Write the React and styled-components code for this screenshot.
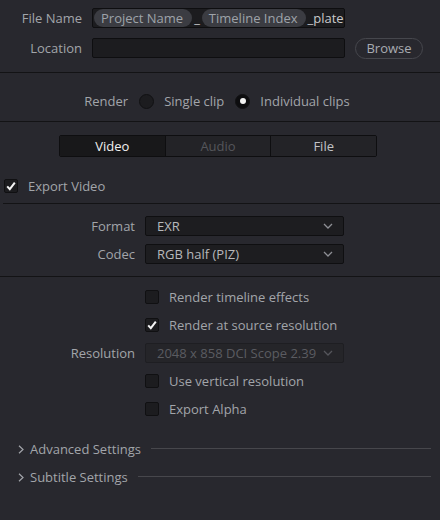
import React from 'react';
import styled, { createGlobalStyle } from 'styled-components';

const GlobalStyle = createGlobalStyle`
	html, body {
		margin: 0;
		background: #28282e;
	}
	body {
		font-family: 'Open Sans', 'Noto Sans', sans-serif;
		font-size: 13px;
		color: #a2a5aa;
	}
`;

const Panel = styled.div`
	width: 440px;
	height: 520px;
	background: #28282e;
	display: flex;
	flex-direction: column;
	overflow: hidden;
`;

const Section = styled.div`
	padding: ${(p) => p.$pad || '0'};
`;

const Divider = styled.div`
	height: 1px;
	background: #131315;
	margin-left: ${(p) => p.$inset || 0}px;
`;

const FileGrid = styled.div`
	display: grid;
	grid-template-columns: 82px 253px 68px;
	grid-auto-rows: 20px;
	column-gap: 10px;
	row-gap: 10px;
	align-items: center;
`;

const FormGrid = styled.div`
	display: grid;
	grid-template-columns: 135px 199px;
	grid-auto-rows: 20px;
	column-gap: 10px;
	row-gap: 8px;
	align-items: center;
`;

const Label = styled.div`
	text-align: right;
	white-space: nowrap;
	color: #a2a5aa;
`;

const TextField = styled.div`
	height: 20px;
	box-sizing: border-box;
	background: #1c1c1f;
	border: 1px solid #0e0e10;
	border-radius: 2px;
	display: flex;
	align-items: center;
	padding: 0 1px;
	overflow: hidden;
	white-space: nowrap;
`;

const Token = styled.span`
	height: 18px;
	display: inline-flex;
	align-items: center;
	padding: 0 9px 0 7px;
	border-radius: 9px;
	background: #3b3c42;
	color: #9ea3a9;
`;

const Literal = styled.span`
	color: #c9c9cb;
	padding: 0 ${(p) => p.$pad || 1}px;
`;

const BrowseButton = styled.button`
	height: 21px;
	width: 68px;
	box-sizing: border-box;
	border: 1px solid #46474d;
	border-radius: 11px;
	background: transparent;
	color: #a8acb2;
	font: inherit;
	padding: 0;
`;

const RenderRow = styled.div`
	display: flex;
	align-items: center;
	justify-content: center;
	gap: 11px;
	height: 20px;
	padding-right: 6px;
`;

const RadioOption = styled.label`
	display: flex;
	align-items: center;
	gap: 10px;
`;

const Radio = styled.span`
	width: 15px;
	height: 15px;
	box-sizing: border-box;
	border-radius: 50%;
	border: 1px solid #111113;
	background: ${(p) => (p.$checked ? '#0d0d0f' : '#1c1c1f')};
	display: flex;
	align-items: center;
	justify-content: center;
	&::after {
		content: '';
		display: ${(p) => (p.$checked ? 'block' : 'none')};
		width: 6px;
		height: 6px;
		border-radius: 50%;
		background: #f2f2f2;
	}
`;

const Tabs = styled.div`
	display: flex;
	width: 318px;
	height: 22px;
	margin: 0 auto;
	position: relative;
	left: -2px;
	box-sizing: border-box;
	border: 1px solid #0e0e10;
	border-radius: 2px;
	overflow: hidden;
`;

const Tab = styled.div`
	flex: 1;
	display: flex;
	align-items: center;
	justify-content: center;
	background: ${(p) => (p.$active ? '#18181a' : '#232327')};
	color: ${(p) => (p.$active ? '#f0f0f0' : p.$disabled ? '#55565b' : '#c2c3c6')};
	& + & {
		border-left: 1px solid #0e0e10;
	}
`;

const CheckRow = styled.label`
	display: flex;
	align-items: center;
	gap: 10px;
	height: 20px;
	white-space: nowrap;
	padding-left: ${(p) => p.$indent || 0}px;
	margin-top: ${(p) => p.$top || 0}px;
	grid-column: ${(p) => p.$col || 'auto'};
`;

const Box = styled.span`
	width: 14px;
	height: 14px;
	box-sizing: border-box;
	border: 1px solid #101012;
	border-radius: 2px;
	background: #1c1c1f;
	display: flex;
	align-items: center;
	justify-content: center;
	flex-shrink: 0;
`;

const Select = styled.div`
	height: 20px;
	box-sizing: border-box;
	display: flex;
	align-items: center;
	justify-content: space-between;
	padding: 0 10px 0 11px;
	border: 1px solid ${(p) => (p.$disabled ? '#1e1e22' : '#0f0f11')};
	border-radius: 2px;
	background: ${(p) => (p.$disabled ? '#252529' : '#1d1d20')};
	color: ${(p) => (p.$disabled ? '#5b5c61' : '#b7b8bb')};
	white-space: nowrap;
	svg {
		color: ${(p) => (p.$disabled ? '#55565b' : '#8e8f95')};
	}
`;

const Disclosure = styled.div`
	display: flex;
	align-items: center;
	height: 20px;
	padding: 0 9px 0 18px;
	color: #a2a5aa;
	& + & {
		margin-top: 8px;
	}
`;

const DisclosureTitle = styled.span`
	margin-left: 6px;
	white-space: nowrap;
`;

const DisclosureLine = styled.span`
	flex: 1;
	height: 1px;
	margin: 0 0 1px 10px;
	background: #47474c;
`;

function Check() {
	return (
		<svg width='10' height='10' viewBox='0 0 10 10'>
			<path d='M1.2 5.4 L3.8 8.2 L8.8 1.6' fill='none' stroke='#f4f4f4' strokeWidth='2' />
		</svg>
	);
}

function CheckBox({ checked }) {
	return <Box>{checked && <Check />}</Box>;
}

function Chevron() {
	return (
		<svg width='10' height='6' viewBox='0 0 10 6'>
			<path d='M1 1 L5 5 L9 1' fill='none' stroke='currentColor' strokeWidth='1.3' />
		</svg>
	);
}

function Caret() {
	return (
		<svg width='6' height='9' viewBox='0 0 6 9'>
			<path d='M1 0.8 L5 4.5 L1 8.2' fill='none' stroke='#a2a5aa' strokeWidth='1.2' />
		</svg>
	);
}

export default function App() {
	return (
		<>
			<GlobalStyle />
			<Panel>
				<Section $pad='8px 0 14px'>
					<FileGrid>
						<Label>File Name</Label>
						<TextField>
							<Token>Project Name</Token>
							<Literal $pad={2}>_</Literal>
							<Token>Timeline Index</Token>
							<Literal>_plate</Literal>
						</TextField>
						<span />
						<Label>Location</Label>
						<TextField />
						<BrowseButton>Browse</BrowseButton>
					</FileGrid>
				</Section>
				<Divider />

				<Section $pad='18px 0 10px'>
					<RenderRow>
						<span>Render</span>
						<RadioOption>
							<Radio />
							Single clip
						</RadioOption>
						<RadioOption>
							<Radio $checked />
							Individual clips
						</RadioOption>
					</RenderRow>
				</Section>
				<Divider />

				<Section $pad='13px 0 7px'>
					<Tabs>
						<Tab $active>Video</Tab>
						<Tab $disabled>Audio</Tab>
						<Tab>File</Tab>
					</Tabs>
					<CheckRow $indent={4} $top={19}>
						<CheckBox checked />
						Export Video
					</CheckRow>
				</Section>
				<Divider $inset={3} />

				<Section $pad='12px 0'>
					<FormGrid>
						<Label>Format</Label>
						<Select>
							EXR
							<Chevron />
						</Select>
						<Label>Codec</Label>
						<Select>
							RGB half (PIZ)
							<Chevron />
						</Select>
					</FormGrid>
				</Section>
				<Divider />

				<Section $pad='10px 0 20px'>
					<FormGrid>
						<CheckRow $col='2'>
							<CheckBox />
							Render timeline effects
						</CheckRow>
						<CheckRow $col='2'>
							<CheckBox checked />
							Render at source resolution
						</CheckRow>
						<Label>Resolution</Label>
						<Select $disabled>
							2048 x 858 DCI Scope 2.39
							<Chevron />
						</Select>
						<CheckRow $col='2'>
							<CheckBox />
							Use vertical resolution
						</CheckRow>
						<CheckRow $col='2'>
							<CheckBox />
							Export Alpha
						</CheckRow>
					</FormGrid>
				</Section>

				<Section>
					<Disclosure>
						<Caret />
						<DisclosureTitle>Advanced Settings</DisclosureTitle>
						<DisclosureLine />
					</Disclosure>
					<Disclosure>
						<Caret />
						<DisclosureTitle>Subtitle Settings</DisclosureTitle>
						<DisclosureLine />
					</Disclosure>
				</Section>
			</Panel>
		</>
	);
}
